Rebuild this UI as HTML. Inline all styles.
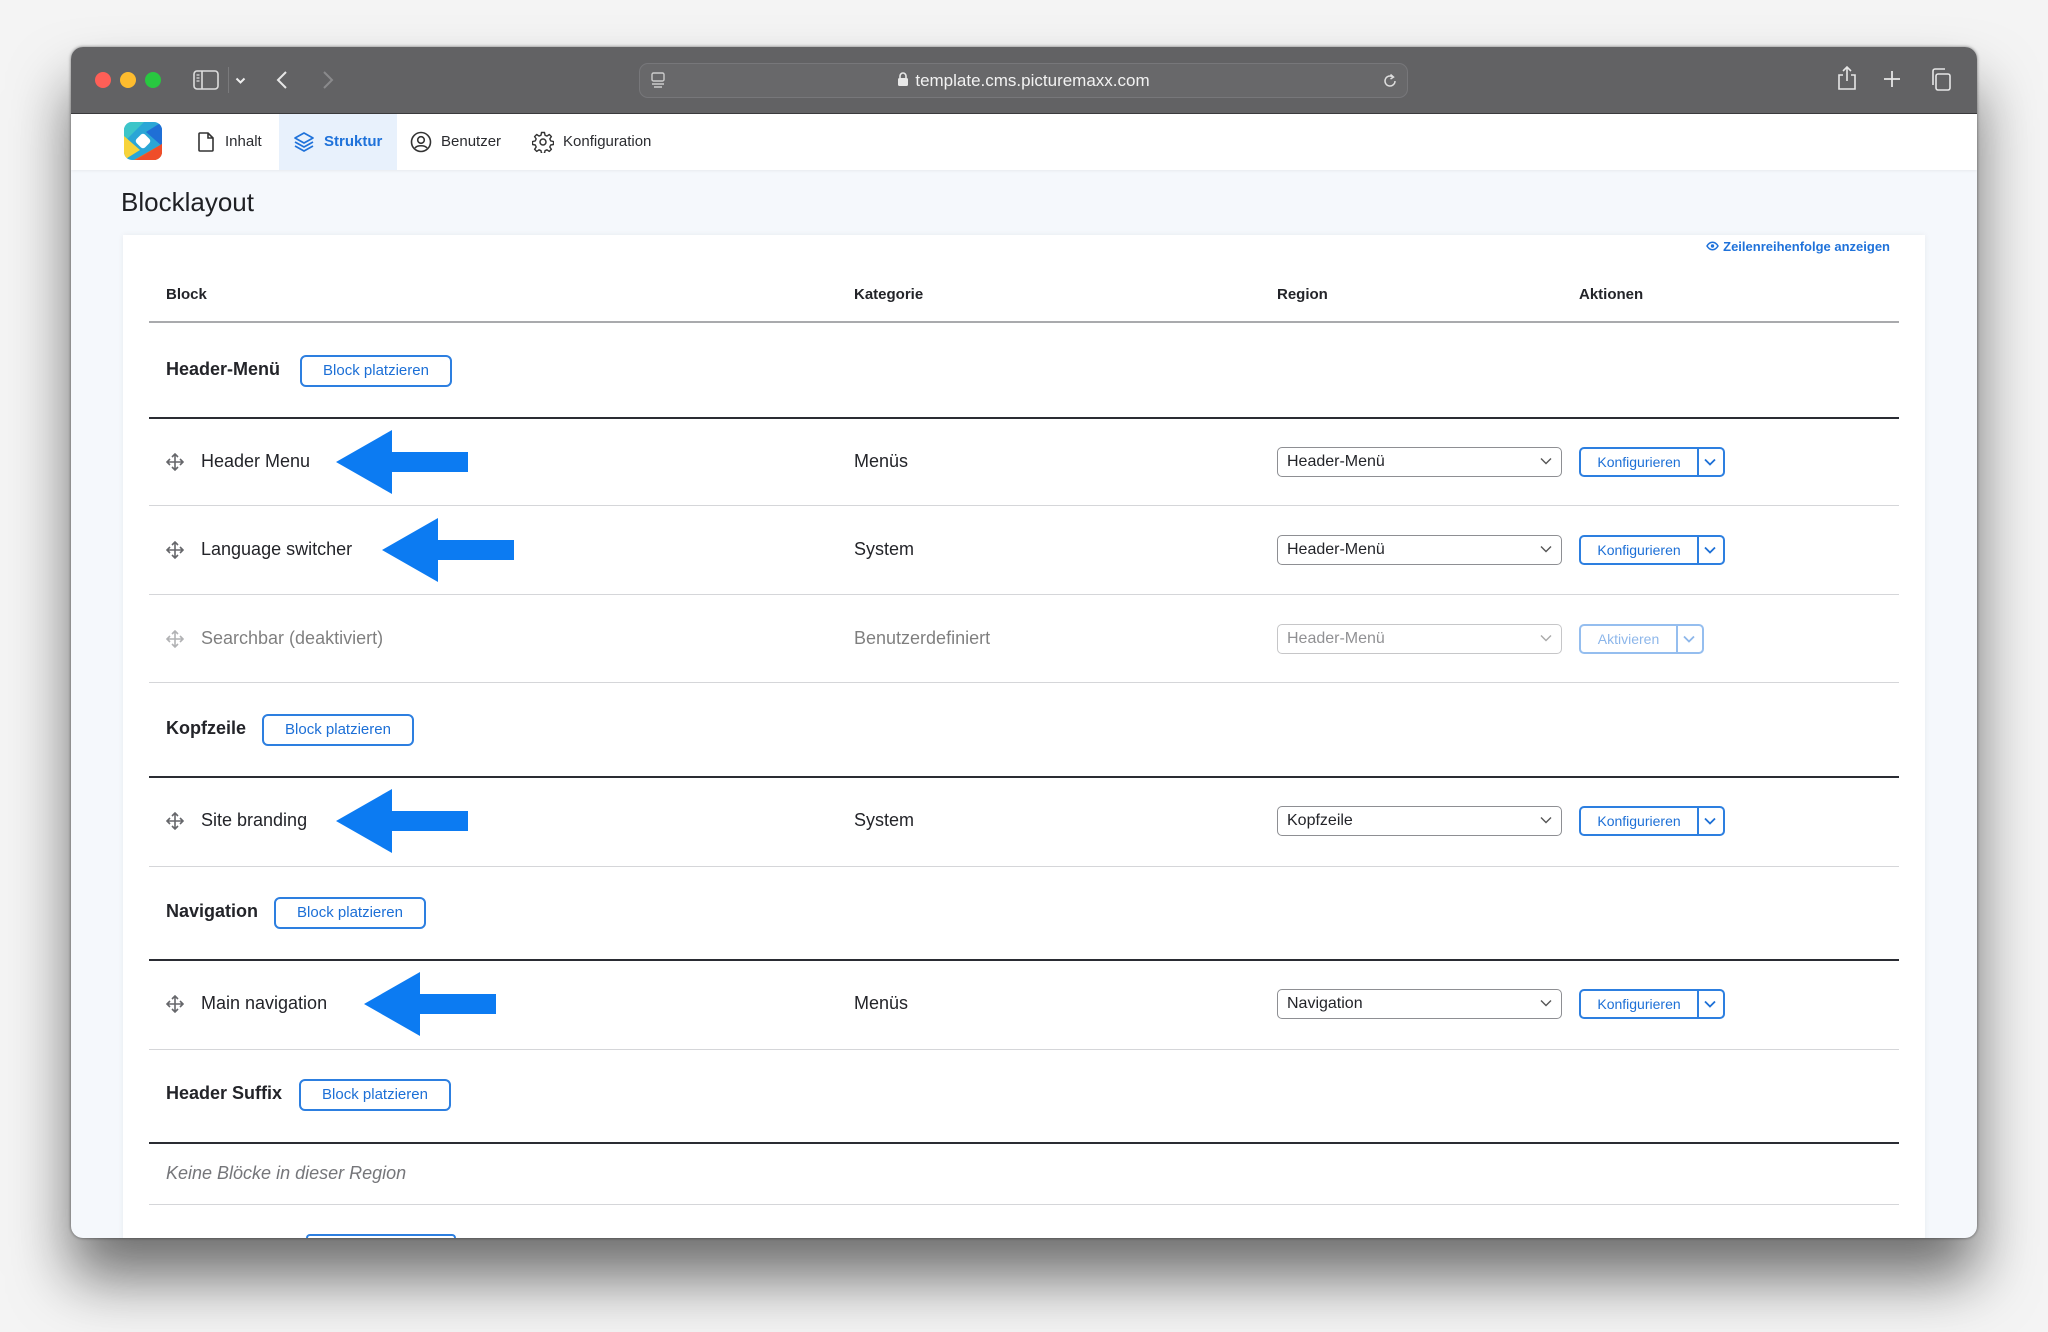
<!DOCTYPE html>
<html><head><meta charset="utf-8"><style>
*{margin:0;padding:0;box-sizing:border-box}
body{width:2048px;height:1332px;background:#f4f4f4;position:relative;overflow:hidden;font-family:"Liberation Sans",sans-serif;color:#232429}
.a{position:absolute;white-space:nowrap}
#win{left:71px;top:47px;width:1906px;height:1191px;border-radius:12px;overflow:hidden;background:#f5f8fc;box-shadow:0 40px 60px rgba(0,0,0,.55),0 0 3px rgba(0,0,0,.5)}
#tb{left:0;top:0;width:1906px;height:67px;background:#626264;border-bottom:1px solid #3b3b3d}
.dot{width:16px;height:16px;border-radius:50%;top:25px}
#url{left:568px;top:16px;width:769px;height:35px;border:1px solid #77777a;border-radius:9px;background:#68686a}
#nav{left:0;top:67px;width:1906px;height:56px;background:#fff;box-shadow:0 1px 3px rgba(0,0,0,.06)}
.ni{top:0;height:56px;line-height:56px;font-size:15px;color:#2b2c30}
#card{left:52px;top:188px;width:1802px;height:1010px;background:#fff;box-shadow:0 0 6px rgba(0,0,0,.06)}
.th{font-size:15px;font-weight:bold;top:0}
.ln{left:78px;width:1780px;height:1px;background:#d5d6d9}
.dk{height:2px;background:#2a2c33}
.rg{font-size:18px;font-weight:bold;left:95px}
.bp{height:32px;border:2px solid #2d7fe0;border-radius:6px;color:#1c6fd6;font-size:15px;text-align:center;line-height:28px;width:152px}
.sel{left:1206px;width:285px;height:30px;border:1.5px solid #8e8f93;border-radius:5px;font-size:16px;line-height:27px;padding-left:9px}
.sel svg{position:absolute;right:9px;top:9px}
.kb{left:1508px;width:146px;height:30px;border:2px solid #2d7fe0;border-radius:5px;color:#1c6fd6;font-size:14px;line-height:26px}
.kb span{position:absolute;left:0;width:116px;text-align:center}
.kb i{position:absolute;left:116px;top:0;width:2px;height:26px;background:#2d7fe0}
.kb svg{position:absolute;right:7px;top:9px}
.dis{opacity:.5}
</style></head><body>
<div id="win" class="a">
 <div id="tb" class="a">
  <div class="a dot" style="left:24px;background:#fe5f57"></div>
  <div class="a dot" style="left:49px;background:#febc2e"></div>
  <div class="a dot" style="left:74px;background:#28c840"></div>
  <svg class="a" style="left:122px;top:23px" width="26" height="20" viewBox="0 0 26 20"><rect x="1" y="1" width="24" height="18" rx="3" fill="none" stroke="#ddd" stroke-width="1.6"/><line x1="9" y1="1" x2="9" y2="19" stroke="#ddd" stroke-width="1.6"/><path d="M3.5 5h3M3.5 8h3M3.5 11h3" stroke="#ddd" stroke-width="1.2"/></svg>
  <div class="a" style="left:157px;top:20px;width:1px;height:26px;background:#7a7a7c"></div>
  <svg class="a" style="left:164px;top:30px" width="11" height="7" viewBox="0 0 11 7"><path d="M1.5 1.5l4 4 4-4" fill="none" stroke="#eee" stroke-width="2"/></svg>
  <svg class="a" style="left:205px;top:23px" width="12" height="20" viewBox="0 0 12 20"><path d="M10 2L2 10l8 8" fill="none" stroke="#e6e6e6" stroke-width="2"/></svg>
  <svg class="a" style="left:251px;top:23px" width="12" height="20" viewBox="0 0 12 20"><path d="M2 2l8 8-8 8" fill="none" stroke="#8a8a8c" stroke-width="2"/></svg>
  <div id="url" class="a">
   <svg class="a" style="left:10px;top:8px" width="16" height="18" viewBox="0 0 16 18"><rect x="2" y="1" width="12" height="8" rx="1.5" fill="none" stroke="#ccc" stroke-width="1.4"/><path d="M2 12h12M4 15h8" stroke="#ccc" stroke-width="1.4"/></svg>
   <div class="a" style="left:0;width:767px;top:0;line-height:33px;text-align:center;color:#f2f2f2;font-size:17px"><svg width="12" height="15" viewBox="0 0 12 15" style="vertical-align:-1px;margin-right:6px"><rect x="1" y="6" width="10" height="8" rx="1.5" fill="#e8e8e8"/><path d="M3 6V4a3 3 0 016 0v2" fill="none" stroke="#e8e8e8" stroke-width="1.6"/></svg>template.cms.picturemaxx.com</div>
   <svg class="a" style="left:741px;top:8px" width="18" height="18" viewBox="0 0 18 18"><path d="M14 9a5 5 0 11-2-4" fill="none" stroke="#ddd" stroke-width="1.5"/><path d="M9.5 2.5l3 2.5-3 2" fill="none" stroke="#ddd" stroke-width="1.5"/></svg>
  </div>
  <svg class="a" style="left:1766px;top:18px" width="20" height="26" viewBox="0 0 20 26"><path d="M6 10H2v14h16V10h-4M10 16V2M6 6l4-4 4 4" fill="none" stroke="#e6e6e6" stroke-width="1.6"/></svg>
  <svg class="a" style="left:1812px;top:23px" width="18" height="18" viewBox="0 0 18 18"><path d="M9 1v16M1 9h16" stroke="#e6e6e6" stroke-width="1.8"/></svg>
  <svg class="a" style="left:1859px;top:20px" width="22" height="24" viewBox="0 0 22 24"><rect x="6" y="7" width="14" height="16" rx="2" fill="none" stroke="#e6e6e6" stroke-width="1.6"/><path d="M3 18V4a2 2 0 012-2h10" fill="none" stroke="#e6e6e6" stroke-width="1.6"/></svg>
 </div>
 <div id="nav" class="a">
  <svg class="a" style="left:53px;top:8px" width="38" height="38" viewBox="0 0 38 38"><defs><clipPath id="c"><rect width="38" height="38" rx="8"/></clipPath></defs><g clip-path="url(#c)"><rect width="38" height="38" fill="#2aa6d6"/><path d="M0 0h20L0 20z" fill="#3cc5c9"/><path d="M38 0v24L22 10z" fill="#1f6fd6"/><path d="M0 14l16 14L0 38z" fill="#f7d33a"/><path d="M38 22v16H10z" fill="#f26b1d"/><path d="M12 38l26-16v16z" fill="#ef4d2a"/><rect x="13" y="13" width="12" height="12" rx="3" transform="rotate(45 19 19)" fill="#fff"/></g></svg>
  <svg class="a" style="left:127px;top:18px" width="16" height="20" viewBox="0 0 16 20"><path d="M2 1h8l5 5v12a1 1 0 01-1 1H2a1 1 0 01-1-1V2a1 1 0 011-1zM10 1v5h5" fill="none" stroke="#333" stroke-width="1.6"/></svg>
  <div class="a ni" style="left:154px">Inhalt</div>
  <div class="a" style="left:208px;top:0;width:118px;height:56px;background:#e8f1fc"></div>
  <svg class="a" style="left:222px;top:17px" width="22" height="22" viewBox="0 0 22 22"><path d="M11 2l9 5-9 5-9-5z M2 11l9 5 9-5 M2 15l9 5 9-5" fill="none" stroke="#1f72da" stroke-width="1.7" stroke-linejoin="round"/></svg>
  <div class="a ni" style="left:253px;color:#1f72da;font-weight:bold">Struktur</div>
  <svg class="a" style="left:339px;top:17px" width="22" height="22" viewBox="0 0 22 22"><circle cx="11" cy="11" r="9.5" fill="none" stroke="#333" stroke-width="1.6"/><circle cx="11" cy="9" r="3.3" fill="none" stroke="#333" stroke-width="1.6"/><path d="M5 17c2-3 10-3 12 0" fill="none" stroke="#333" stroke-width="1.6"/></svg>
  <div class="a ni" style="left:370px">Benutzer</div>
  <svg class="a" style="left:461px;top:17px" width="22" height="22" viewBox="0 0 22 22"><circle cx="11" cy="11" r="3" fill="none" stroke="#333" stroke-width="1.5"/><path d="M9.5 1.5h3l.5 2.7 2 .9 2.3-1.6 2.1 2.1-1.6 2.3.9 2 2.8.6v3l-2.8.5-.9 2 1.6 2.3-2.1 2.1-2.3-1.6-2 .9-.5 2.8h-3l-.5-2.8-2-.9-2.3 1.6-2.1-2.1 1.6-2.3-.9-2-2.8-.5v-3l2.8-.6.9-2-1.6-2.3 2.1-2.1 2.3 1.6 2-.9z" fill="none" stroke="#333" stroke-width="1.4" stroke-linejoin="round"/></svg>
  <div class="a ni" style="left:492px">Konfiguration</div>
 </div>
 <div class="a" style="left:50px;top:140px;font-size:26px;color:#1f2024">Blocklayout</div>
 <div id="card" class="a">
  <div class="a" style="right:35px;top:4px;font-size:13px;font-weight:bold;color:#1f72da"><svg width="13" height="10" viewBox="0 0 13 10" style="margin-right:4px"><path d="M1 5c3-5 8-5 11 0-3 5-8 5-11 0z" fill="none" stroke="#1f72da" stroke-width="1.5"/><circle cx="6.5" cy="5" r="1.7" fill="#1f72da"/></svg>Zeilenreihenfolge anzeigen</div>
 </div>
</div>
<div class="a th" style="left:166px;top:286px">Block</div>
<div class="a th" style="left:854px;top:286px">Kategorie</div>
<div class="a th" style="left:1277px;top:286px">Region</div>
<div class="a th" style="left:1579px;top:286px">Aktionen</div>
<div class="a" style="left:149px;top:321px;width:1750px;height:2px;background:#a9aaad"></div>

<div class="a rg" style="left:166px;top:359px">Header-Menü</div>
<div class="a bp" style="left:300px;top:355px">Block platzieren</div>
<div class="a dk" style="left:149px;top:417px;width:1750px"></div>

<div class="a ln" style="left:149px;top:505px;width:1750px"></div>
<div class="a ln" style="left:149px;top:594px;width:1750px"></div>
<div class="a ln" style="left:149px;top:682px;width:1750px"></div>
<div class="a rg" style="left:166px;top:718px">Kopfzeile</div>
<div class="a bp" style="left:262px;top:714px">Block platzieren</div>
<div class="a dk" style="left:149px;top:776px;width:1750px"></div>
<div class="a ln" style="left:149px;top:866px;width:1750px"></div>
<div class="a rg" style="left:166px;top:901px">Navigation</div>
<div class="a bp" style="left:274px;top:897px">Block platzieren</div>
<div class="a dk" style="left:149px;top:959px;width:1750px"></div>
<div class="a ln" style="left:149px;top:1049px;width:1750px"></div>
<div class="a rg" style="left:166px;top:1083px">Header Suffix</div>
<div class="a bp" style="left:299px;top:1079px">Block platzieren</div>
<div class="a dk" style="left:149px;top:1142px;width:1750px"></div>
<div class="a" style="left:166px;top:1163px;font-size:18px;font-style:italic;color:#75767a">Keine Blöcke in dieser Region</div>
<div class="a ln" style="left:149px;top:1204px;width:1750px"></div>
<div class="a" style="left:306px;top:1234px;width:150px;height:4px;border:2px solid #2d7fe0;border-bottom:none;border-radius:6px 6px 0 0"></div>

 <svg class="a" style="left:166px;top:453px" width="18" height="18" viewBox="0 0 18 18"><path d="M9 1v16M1 9h16M6 4l3-3 3 3M6 14l3 3 3-3M4 6L1 9l3 3M14 6l3 3-3 3" fill="none" stroke="#66676b" stroke-width="1.6"/></svg>
 <div class="a" style="left:201px;top:451px;font-size:18px">Header Menu</div>
 <svg class="a" style="left:336px;top:430px" width="134" height="64" viewBox="0 0 134 64"><path d="M0 32L56 0v22h76v20H56v22z" fill="#0c7bf2"/></svg>
 <div class="a" style="left:854px;top:451px;font-size:18px">Menüs</div>
 <div class="a sel" style="left:1277px;top:447px">Header-Menü<svg width="12" height="8" viewBox="0 0 12 8"><path d="M1 1.5l5 5 5-5" fill="none" stroke="#555" stroke-width="1.4"/></svg></div>
 <div class="a kb" style="left:1579px;top:447px"><span>Konfigurieren</span><i></i><svg width="12" height="8" viewBox="0 0 12 8"><path d="M1 1.5l5 5 5-5" fill="none" stroke="#1c6fd6" stroke-width="1.8"/></svg></div>

 <svg class="a" style="left:166px;top:541px" width="18" height="18" viewBox="0 0 18 18"><path d="M9 1v16M1 9h16M6 4l3-3 3 3M6 14l3 3 3-3M4 6L1 9l3 3M14 6l3 3-3 3" fill="none" stroke="#66676b" stroke-width="1.6"/></svg>
 <div class="a" style="left:201px;top:539px;font-size:18px">Language switcher</div>
 <svg class="a" style="left:382px;top:518px" width="134" height="64" viewBox="0 0 134 64"><path d="M0 32L56 0v22h76v20H56v22z" fill="#0c7bf2"/></svg>
 <div class="a" style="left:854px;top:539px;font-size:18px">System</div>
 <div class="a sel" style="left:1277px;top:535px">Header-Menü<svg width="12" height="8" viewBox="0 0 12 8"><path d="M1 1.5l5 5 5-5" fill="none" stroke="#555" stroke-width="1.4"/></svg></div>
 <div class="a kb" style="left:1579px;top:535px"><span>Konfigurieren</span><i></i><svg width="12" height="8" viewBox="0 0 12 8"><path d="M1 1.5l5 5 5-5" fill="none" stroke="#1c6fd6" stroke-width="1.8"/></svg></div>

 <div class="dis">
 <svg class="a" style="left:166px;top:630px" width="18" height="18" viewBox="0 0 18 18"><path d="M9 1v16M1 9h16M6 4l3-3 3 3M6 14l3 3 3-3M4 6L1 9l3 3M14 6l3 3-3 3" fill="none" stroke="#66676b" stroke-width="1.6"/></svg>
 <div class="a" style="left:201px;top:628px;font-size:18px;color:#000">Searchbar (deaktiviert)</div>
 <div class="a" style="left:854px;top:628px;font-size:18px;color:#000">Benutzerdefiniert</div>
 <div class="a sel" style="left:1277px;top:624px">Header-Menü<svg width="12" height="8" viewBox="0 0 12 8"><path d="M1 1.5l5 5 5-5" fill="none" stroke="#555" stroke-width="1.4"/></svg></div>
 <div class="a kb" style="left:1579px;top:624px;width:125px"><span style="width:95px">Aktivieren</span><i style="left:95px"></i><svg width="12" height="8" viewBox="0 0 12 8"><path d="M1 1.5l5 5 5-5" fill="none" stroke="#1c6fd6" stroke-width="1.8"/></svg></div>
 </div>

 <svg class="a" style="left:166px;top:812px" width="18" height="18" viewBox="0 0 18 18"><path d="M9 1v16M1 9h16M6 4l3-3 3 3M6 14l3 3 3-3M4 6L1 9l3 3M14 6l3 3-3 3" fill="none" stroke="#66676b" stroke-width="1.6"/></svg>
 <div class="a" style="left:201px;top:810px;font-size:18px">Site branding</div>
 <svg class="a" style="left:336px;top:789px" width="134" height="64" viewBox="0 0 134 64"><path d="M0 32L56 0v22h76v20H56v22z" fill="#0c7bf2"/></svg>
 <div class="a" style="left:854px;top:810px;font-size:18px">System</div>
 <div class="a sel" style="left:1277px;top:806px">Kopfzeile<svg width="12" height="8" viewBox="0 0 12 8"><path d="M1 1.5l5 5 5-5" fill="none" stroke="#555" stroke-width="1.4"/></svg></div>
 <div class="a kb" style="left:1579px;top:806px"><span>Konfigurieren</span><i></i><svg width="12" height="8" viewBox="0 0 12 8"><path d="M1 1.5l5 5 5-5" fill="none" stroke="#1c6fd6" stroke-width="1.8"/></svg></div>

 <svg class="a" style="left:166px;top:995px" width="18" height="18" viewBox="0 0 18 18"><path d="M9 1v16M1 9h16M6 4l3-3 3 3M6 14l3 3 3-3M4 6L1 9l3 3M14 6l3 3-3 3" fill="none" stroke="#66676b" stroke-width="1.6"/></svg>
 <div class="a" style="left:201px;top:993px;font-size:18px">Main navigation</div>
 <svg class="a" style="left:364px;top:972px" width="134" height="64" viewBox="0 0 134 64"><path d="M0 32L56 0v22h76v20H56v22z" fill="#0c7bf2"/></svg>
 <div class="a" style="left:854px;top:993px;font-size:18px">Menüs</div>
 <div class="a sel" style="left:1277px;top:989px">Navigation<svg width="12" height="8" viewBox="0 0 12 8"><path d="M1 1.5l5 5 5-5" fill="none" stroke="#555" stroke-width="1.4"/></svg></div>
 <div class="a kb" style="left:1579px;top:989px"><span>Konfigurieren</span><i></i><svg width="12" height="8" viewBox="0 0 12 8"><path d="M1 1.5l5 5 5-5" fill="none" stroke="#1c6fd6" stroke-width="1.8"/></svg></div>
</body></html>
